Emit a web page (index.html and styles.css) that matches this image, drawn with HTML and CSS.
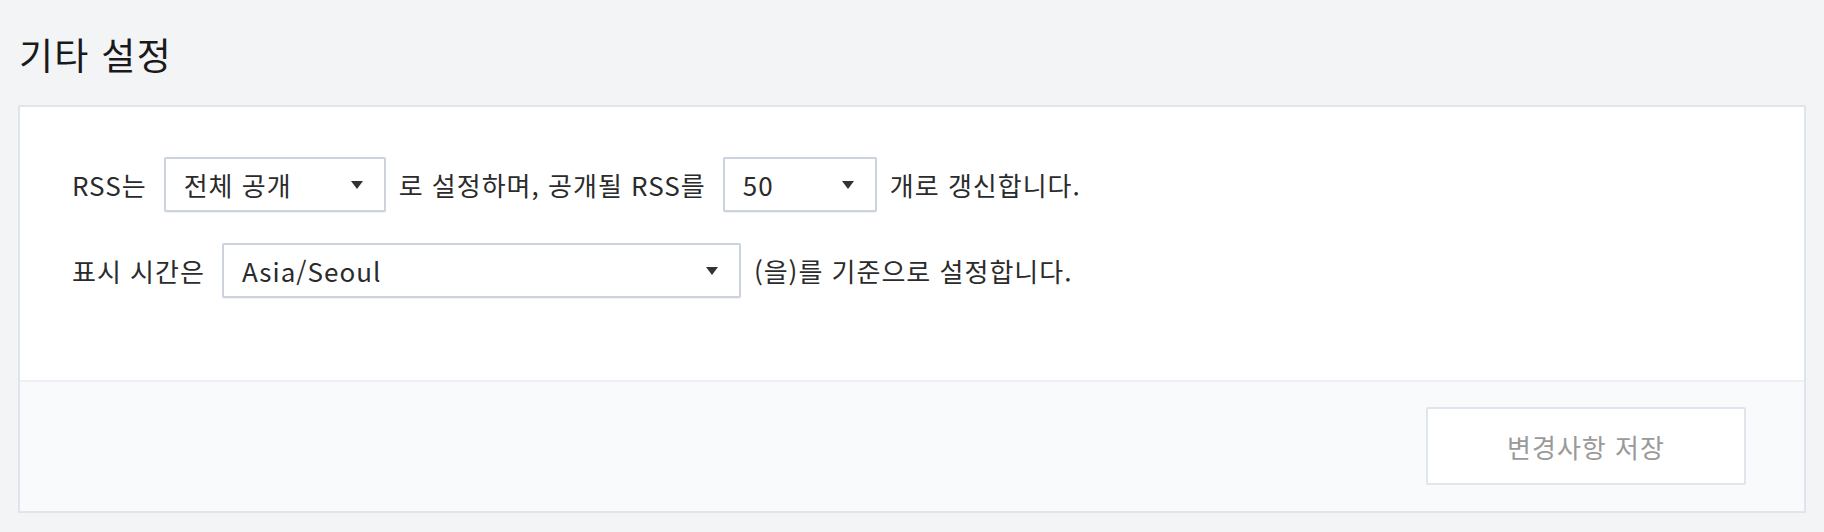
FILE: index.html
```html
<!DOCTYPE html>
<html lang="ko">
<head>
<meta charset="utf-8">
<title>기타 설정</title>
<link rel="stylesheet" href="styles.css">
</head>
<body>
<div class="page">
  <h1 class="title">기타 설정</h1>
  <section class="panel">
    <div class="panel-body">
      <div class="row">
        <span class="label">RSS는</span>
        <div class="select w-visibility"><span class="select-value">전체 공개</span><span class="caret"></span></div>
        <span class="label">로 설정하며, 공개될 RSS를</span>
        <div class="select w-count"><span class="select-value">50</span><span class="caret"></span></div>
        <span class="label">개로 갱신합니다.</span>
      </div>
      <div class="row">
        <span class="label">표시 시간은</span>
        <div class="select w-zone"><span class="select-value">Asia/Seoul</span><span class="caret"></span></div>
        <span class="label">(을)를 기준으로 설정합니다.</span>
      </div>
    </div>
    <div class="panel-footer">
      <button class="save-btn" type="button">변경사항 저장</button>
    </div>
  </section>
</div>
</body>
</html>
```

FILE: styles.css
```css
* { box-sizing: border-box; }
html, body {
  margin: 0;
  padding: 0;
  background: #f3f4f6;
}
body {
  font-family: "Noto Sans CJK KR", "Noto Sans", sans-serif;
  color: #2b2b2b;
}
.page {
  padding: 28px 18px 18px;
}
.title {
  margin: 0 0 25px 1px;
  font-size: 37px;
  font-weight: 400;
  letter-spacing: 1.3px;
  line-height: 52px;
  color: #1a1a1a;
}
.panel {
  background: #fff;
  border: 2px solid #e0e5ed;
}
.panel-body {
  padding: 50px 52px 51px;
  display: flex;
  flex-direction: column;
  gap: 31px;
}
.row {
  display: flex;
  align-items: center;
  font-size: 26px;
  letter-spacing: 1px;
  line-height: 36px;
}
.row:last-child { margin-bottom: 31px; }
.label { white-space: nowrap; }
.select {
  height: 55px;
  margin: 0 13px 0 17px;
  border: 2px solid #ccd3de;
  border-radius: 2px;
  background: #fff;
  display: flex;
  align-items: center;
  justify-content: space-between;
  padding: 0 21px 0 18px;
  box-shadow: 0 1px 1px rgba(0,0,0,0.06);
}
.select-value { color: #2b2b2b; }
.caret {
  width: 0;
  height: 0;
  border-left: 6px solid transparent;
  border-right: 6px solid transparent;
  border-top: 8px solid #333;
}
.w-visibility { width: 222px; }
.w-count { width: 154px; }
.w-zone { width: 519px; }
.panel-footer {
  background: #f9fafb;
  border-top: 2px solid #edf0f4;
  padding: 25px 58px 26px;
  display: flex;
  justify-content: flex-end;
}
.save-btn {
  width: 320px;
  height: 78px;
  background: #fff;
  border: 2px solid #e0e5ee;
  border-radius: 2px;
  font-family: "Noto Sans CJK KR", "Noto Sans", sans-serif;
  font-size: 26px;
  letter-spacing: 1px;
  color: #9a9a9a;
}
```
